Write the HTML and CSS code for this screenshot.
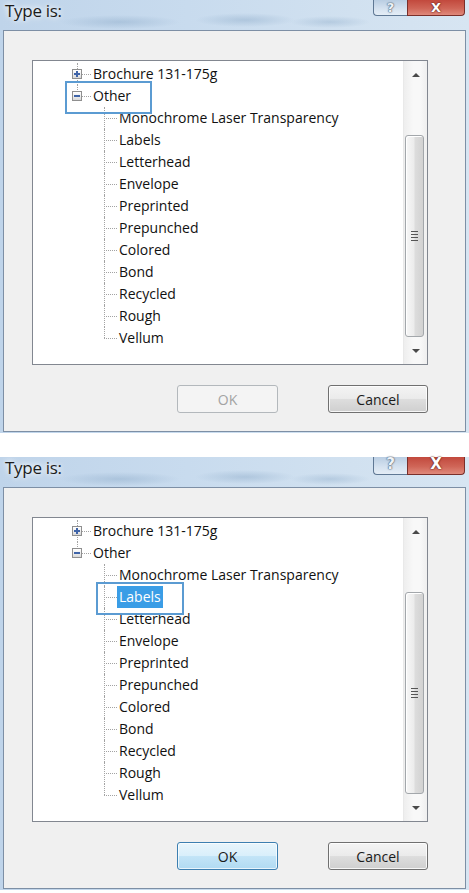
FILE: index.html
```html
<!DOCTYPE html>
<html lang="en">
<head>
<meta charset="utf-8">
<title>Type is</title>
<link rel="stylesheet" href="styles.css">
</head>
<body>
<div class="page">
  <section class="frame frame--cropped">
    <header class="titlebar">
      <span class="title">Type is:</span>
      <div class="caption">
        <span class="cap-btn cap-help">?</span>
        <span class="cap-btn cap-close">X</span>
      </div>
    </header>
    <div class="client">
      <div class="treebox">
        <div class="tree-view">
          <ul class="tree">
            <li class="node"><span class="exp plus"></span><span class="label">Brochure 131-175g</span></li>
            <li class="node"><span class="exp minus"></span><span class="label">Other</span><span class="callout callout--root"></span>
              <ul class="children">
                <li class="leaf"><span class="label">Monochrome Laser Transparency</span></li>
                <li class="leaf"><span class="label">Labels</span></li>
                <li class="leaf"><span class="label">Letterhead</span></li>
                <li class="leaf"><span class="label">Envelope</span></li>
                <li class="leaf"><span class="label">Preprinted</span></li>
                <li class="leaf"><span class="label">Prepunched</span></li>
                <li class="leaf"><span class="label">Colored</span></li>
                <li class="leaf"><span class="label">Bond</span></li>
                <li class="leaf"><span class="label">Recycled</span></li>
                <li class="leaf"><span class="label">Rough</span></li>
                <li class="leaf"><span class="label">Vellum</span></li>
              </ul>
            </li>
          </ul>
        </div>
        <div class="scrollbar">
          <div class="sb-btn sb-up"><span class="arrow arrow-up"></span></div>
          <div class="sb-track"><div class="thumb"><span class="grip"></span></div></div>
          <div class="sb-btn sb-down"><span class="arrow arrow-down"></span></div>
        </div>
      </div>
      <div class="actions">
        <button class="btn btn-disabled" disabled>OK</button>
        <button class="btn">Cancel</button>
      </div>
    </div>
  </section>

  <section class="frame">
    <header class="titlebar">
      <span class="title">Type is:</span>
      <div class="caption">
        <span class="cap-btn cap-help">?</span>
        <span class="cap-btn cap-close">X</span>
      </div>
    </header>
    <div class="client">
      <div class="treebox">
        <div class="tree-view">
          <ul class="tree">
            <li class="node"><span class="exp plus"></span><span class="label">Brochure 131-175g</span></li>
            <li class="node"><span class="exp minus"></span><span class="label">Other</span>
              <ul class="children">
                <li class="leaf"><span class="label">Monochrome Laser Transparency</span></li>
                <li class="leaf"><span class="label label--selected">Labels</span><span class="callout callout--leaf"></span></li>
                <li class="leaf"><span class="label">Letterhead</span></li>
                <li class="leaf"><span class="label">Envelope</span></li>
                <li class="leaf"><span class="label">Preprinted</span></li>
                <li class="leaf"><span class="label">Prepunched</span></li>
                <li class="leaf"><span class="label">Colored</span></li>
                <li class="leaf"><span class="label">Bond</span></li>
                <li class="leaf"><span class="label">Recycled</span></li>
                <li class="leaf"><span class="label">Rough</span></li>
                <li class="leaf"><span class="label">Vellum</span></li>
              </ul>
            </li>
          </ul>
        </div>
        <div class="scrollbar">
          <div class="sb-btn sb-up"><span class="arrow arrow-up"></span></div>
          <div class="sb-track"><div class="thumb"><span class="grip"></span></div></div>
          <div class="sb-btn sb-down"><span class="arrow arrow-down"></span></div>
        </div>
      </div>
      <div class="actions">
        <button class="btn btn-default">OK</button>
        <button class="btn">Cancel</button>
      </div>
    </div>
  </section>
</div>
</body>
</html>
```

FILE: styles.css
```css
* { box-sizing: border-box; }

body {
  margin: 0;
  background: #ffffff;
  font-family: "Open Sans", "Noto Sans", "DejaVu Sans", sans-serif;
  color: #000;
}

.page {
  width: 469px;
  display: flex;
  flex-direction: column;
  gap: 24px;
}

/* ---------- window frame (Aero glass) ---------- */
.frame {
  height: 433px;
  padding: 0 3px 1px 3px;
  display: flex;
  flex-direction: column;
  background:
    radial-gradient(ellipse 60px 7px at 120px 22px, rgba(140,170,200,0.45), rgba(140,170,200,0) 100%),
    radial-gradient(ellipse 50px 7px at 245px 20px, rgba(140,170,200,0.45), rgba(140,170,200,0) 100%),
    radial-gradient(ellipse 40px 6px at 330px 22px, rgba(140,170,200,0.4), rgba(140,170,200,0) 100%),
    linear-gradient(90deg, #bfd4ea 0%, #c8dbee 40%, #d1e1f0 75%, #d7e5f2 100%);
}

.titlebar {
  height: 30px;
  flex: none;
  display: flex;
  justify-content: space-between;
  align-items: flex-start;
}

.title {
  padding-left: 2px;
  font-size: 17px;
  line-height: 22px;
  letter-spacing: -0.3px;
  color: #1c1c1c;
  text-shadow: 0 0 5px #ffffff, 0 0 9px rgba(255,255,255,0.9);
}

.frame--cropped .title {
  line-height: 20px;
  padding-top: 1px;
}

.caption {
  display: flex;
  margin-right: 1px;
}

.cap-btn {
  height: 18px;
  display: flex;
  align-items: flex-end;
  justify-content: center;
  font-family: "DejaVu Sans", sans-serif;
  font-weight: bold;
  font-size: 15px;
  line-height: 15px;
  padding-bottom: 2px;
  color: #ffffff;
  border: 1px solid #5f7894;
  border-top: none;
}

.frame--cropped .cap-btn {
  height: 16px;
  padding-bottom: 1px;
  font-size: 13px;
  line-height: 13px;
}

.cap-help {
  width: 34px;
  border-radius: 0 0 0 4px;
  border-right: none;
  background: linear-gradient(180deg, #b9cde2 0%, #d6e3f0 60%, #e4edf6 100%);
  color: #eef3f8;
  text-shadow: 0 0 1px #56687c, 0 0 1px #56687c, 0 0 2px #56687c;
}

.cap-close {
  width: 58px;
  border-radius: 0 0 4px 0;
  border-color: #7a2f2a;
  background: linear-gradient(180deg, #c2493d 0%, #cf6557 55%, #e0897b 100%);
  text-shadow: 0 0 1px #5a1b16, 0 0 2px #5a1b16;
}

/* ---------- dialog client area ---------- */
.client {
  height: 402px;
  flex: none;
  border: 1px solid #7d8fa5;
  background: #f0f0f0;
  padding: 29px 37px 18px 28px;
  display: flex;
  flex-direction: column;
}

.treebox {
  height: 305px;
  flex: none;
  border: 1px solid #828790;
  background: #ffffff;
  display: flex;
}

.tree-view {
  flex: 1;
  overflow: hidden;
  padding-top: 2px;
}

.tree,
.children {
  list-style: none;
  margin: 0;
  padding: 0;
}

.tree {
  padding-left: 34px;
}

.children {
  padding-left: 2px;
}

.node,
.leaf {
  position: relative;
  padding-left: 24px;
  font-size: 14px;
}

.label {
  display: inline-block;
  vertical-align: top;
  height: 22px;
  line-height: 22px;
  padding: 0 2px;
  white-space: nowrap;
  color: #111111;
}

.label--selected {
  background: #3a9de6;
  color: #ffffff;
}

/* dotted connector lines */
.node::before,
.leaf::before {
  content: "";
  position: absolute;
  left: 10px;
  top: 0;
  height: 22px;
  border-left: 1px dotted #a3a3a3;
}

.leaf::before {
  left: 11px;
}

.node:last-child::before,
.leaf:last-child::before {
  height: 11px;
}

.node::after,
.leaf::after {
  content: "";
  position: absolute;
  left: 10px;
  top: 11px;
  width: 14px;
  border-top: 1px dotted #a3a3a3;
}

.leaf::after {
  left: 11px;
  width: 13px;
}

/* expand / collapse boxes */
.exp {
  position: absolute;
  z-index: 1;
  left: 5px;
  top: 6px;
  width: 10px;
  height: 10px;
  border: 1px solid #8f8f8f;
  background: linear-gradient(180deg, #ffffff 0%, #ebebeb 60%, #d8d8d8 100%);
}

.exp::before {
  content: "";
  position: absolute;
  left: 1px;
  top: 3px;
  width: 6px;
  height: 2px;
  background: #3f64a8;
}

.exp.plus::after {
  content: "";
  position: absolute;
  left: 3px;
  top: 1px;
  width: 2px;
  height: 6px;
  background: #3f64a8;
}

/* annotation callouts */
.callout {
  position: absolute;
  z-index: 2;
  top: -4px;
  height: 33px;
  border: 2px solid #5b9bd2;
}

.callout--root {
  left: -2px;
  width: 87px;
}

.callout--leaf {
  left: 3px;
  width: 88px;
}

/* ---------- scrollbar ---------- */
.scrollbar {
  width: 24px;
  flex: none;
  display: flex;
  flex-direction: column;
  border-left: 1px solid #e9e9e9;
  background: linear-gradient(90deg, #eeeeee 0%, #f8f8f8 40%, #f8f8f8 70%, #efefef 100%);
}

.sb-btn {
  height: 20px;
  flex: none;
  display: flex;
  justify-content: center;
}

.sb-up {
  padding-top: 12px;
}

.sb-down {
  padding-top: 5px;
}

.arrow {
  width: 0;
  height: 0;
  border-left: 4px solid transparent;
  border-right: 4px solid transparent;
}

.arrow-up {
  border-bottom: 4px solid #4a4a4a;
}

.arrow-down {
  border-top: 4px solid #4a4a4a;
}

.sb-track {
  flex: 1;
  padding-top: 54px;
}

.thumb {
  height: 202px;
  margin: 0 3px 0 1px;
  border: 1px solid #a3a7ab;
  border-radius: 3px;
  background: linear-gradient(90deg, #f7f7f7 0%, #ececec 45%, #dcdcdc 55%, #d2d2d2 100%);
  box-shadow: inset 1px 1px 0 #ffffff;
  display: flex;
  align-items: center;
  justify-content: center;
}

.grip {
  width: 7px;
  height: 10px;
  background: repeating-linear-gradient(180deg, #555555 0, #555555 1px, transparent 1px, transparent 3px);
}

/* ---------- buttons ---------- */
.actions {
  margin-top: 20px;
  display: flex;
  justify-content: flex-end;
  gap: 50px;
}

.btn {
  height: 28px;
  width: 100px;
  border: 1px solid #707070;
  border-radius: 3px;
  font-family: "Open Sans", "Noto Sans", sans-serif;
  font-size: 14px;
  color: #1a1a1a;
  padding: 0;
  background: linear-gradient(180deg, #f4f4f4 0%, #ebebeb 48%, #dddddd 52%, #cfcfcf 100%);
  box-shadow: inset 0 0 0 1px rgba(255,255,255,0.8);
}

.btn-disabled {
  width: 101px;
  border-color: #b3b8bc;
  color: #a3a3a3;
  background: #f4f4f4;
  box-shadow: none;
}

.btn-default {
  width: 101px;
  border-color: #3c7fb1;
  background: linear-gradient(180deg, #e8f5fc 0%, #d9effb 48%, #c2e4f7 52%, #b0daf2 100%);
  box-shadow: inset 0 0 0 1px rgba(255,255,255,0.7);
}
```
